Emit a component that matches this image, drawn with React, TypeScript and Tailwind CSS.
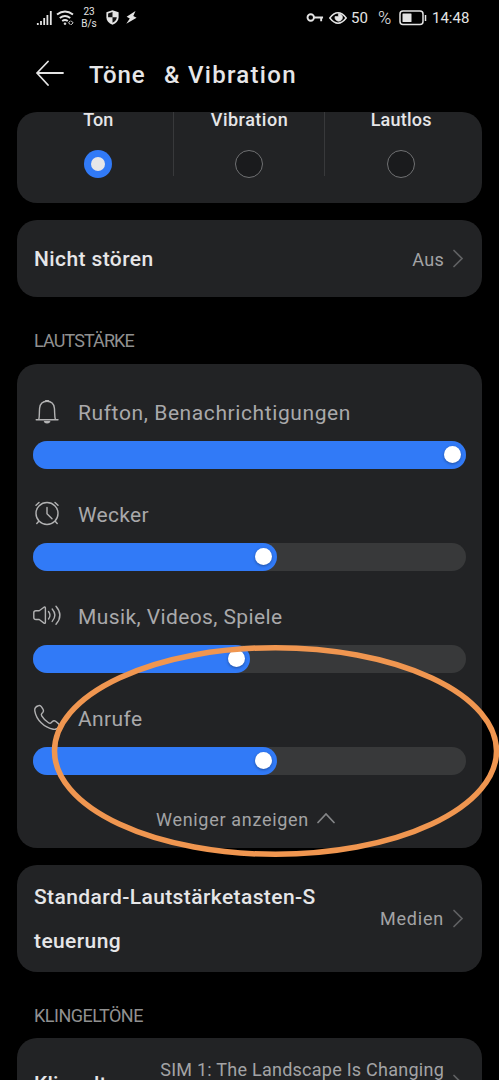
import React from "react";

const volumes = [
  { label: "Rufton, Benachrichtigungen", icon: "bell", value: 433, tracking: "tracking-[0.6px]" },
  { label: "Wecker", icon: "clock", value: 244, tracking: "tracking-[0.3px]" },
  { label: "Musik, Videos, Spiele", icon: "speaker", value: 217, tracking: "tracking-[0.4px]" },
  { label: "Anrufe", icon: "phone", value: 244, tracking: "tracking-[0.4px]" },
];

function VolumeIcon({ name }: { name: string }) {
  return (
    <svg
      className="h-7 w-7 shrink-0 overflow-visible"
      viewBox="0 0 28 28"
      fill="none"
      stroke="#b2b2b3"
      strokeWidth="1.4"
      strokeLinecap="round"
      strokeLinejoin="round"
    >
      {name === "bell" && (
        <>
          <path d="M3.2 21.7H25M5.8 21.5C6.6 18.5 6.2 14 6.6 10.2C7.1 6 10 3.3 14 3.3S20.9 6 21.4 10.2C21.8 14 21.4 18.5 22.4 21.5" />
          <path d="M12.7 2.7h2.8M11.5 23.8q2.5 2.1 5.2 0z" />
        </>
      )}
      {name === "clock" && (
        <>
          <circle cx="14" cy="13.5" r="11" />
          <path d="M14 7.5v6.3l5 5M3 5.200l3-2.800M25 5.200l-3-2.800M5.600 21.500l-1.800 2M22.400 21.500l1.800 2" />
        </>
      )}
      {name === "speaker" && (
        <>
          <path d="M3 8.8h3.2L11 5.2q1.4-.7 1.4 1v14.1q0 1.6-1.4.8l-4.8-3.6H3Q.8 17.5.8 15.5v-4.7Q.8 8.8 3 8.8z" />
          <path d="M15.5 9.5q3 3.8 0 7.5M19.200 7q5.400 6.200 0 12.400M23 4.300q7.800 9 0 18" />
        </>
      )}
      {name === "phone" && (
        <path d="M5.5 1.7C3.3 2.3 1.4 4.2 1.8 6.9C3.2 15.8 11.2 23.7 20.2 25.3C22.7 25.7 24.9 24.3 26 22.3C26.5 21.3 26.2 20.4 25.4 19.6L22.6 17.3C21.5 16.4 20.3 16.6 19.4 17.5L18.2 18.7C17.4 19.5 16.3 19.3 15.2 18.5C12.4 16.7 10.2 14.4 8.7 11.9C8 10.8 8.1 10.2 9 9.3L9.8 8.5C10.7 7.5 10.8 6.5 10.1 5.4L8.5 2.9C7.8 1.8 6.8 1.3 5.5 1.7z" />
      )}
    </svg>
  );
}

function Chevron() {
  return (
    <svg className="h-5 w-3 shrink-0" viewBox="0 0 12 20" fill="none" stroke="#606163" strokeWidth="1.7" strokeLinecap="round">
      <path d="M2 1.5l8 8-8 8" />
    </svg>
  );
}

function Slider({ value }: { value: number }) {
  return (
    <div className="h-7 w-[433px] rounded-full bg-[#38393a]">
      <div className="flex h-7 items-center justify-end rounded-full bg-[#317af7] pr-[5px] pb-px" style={{ width: value }}>
        <div className="h-[17px] w-[17px] rounded-full bg-white shadow-[0_1px_3px_rgba(0,0,0,0.35)]" />
      </div>
    </div>
  );
}

function StatusBar() {
  return (
    <div className="flex h-9 justify-between pr-[29px] pl-9 text-[#e4e4e4]">
      <div className="flex h-[35px] items-center">
        <svg className="h-4 w-4" viewBox="0 0 16 16" fill="none" stroke="currentColor" strokeWidth="1.8">
          <path d="M1.8 13v2M5 11v4M8.2 8v7M11.4 5v10M14.8 1v14" />
        </svg>
        <svg className="ml-1 h-4 w-[18px]" viewBox="0 0 18 16" fill="none" stroke="currentColor" strokeWidth="2">
          <path d="M1 4.5q8-6 16 0M3.8 8q5.2-4 10.4 0M6.2 11q2.8-2 5.6 0" />
          <circle cx="9" cy="13.7" r="1" fill="currentColor" strokeWidth="0.5" />
          <path d="M14.4 10.8l-1.8 2 1.8 2M15.2 10.8l1.8 2-1.8 2" strokeWidth="1" />
        </svg>
        <div className="ml-[7px] w-4 text-center text-[10px] leading-[12px]">
          <div>23</div>
          <div>B/s</div>
        </div>
        <svg className="ml-[9px] h-[15px] w-[13px]" viewBox="0 0 13 15">
          <path d="M6.5.2l6.1 2v5.2c0 3.3-2.4 5.8-6.1 7.4C2.8 13.2.4 10.7.4 7.4V2.2z" fill="currentColor" />
          <path d="M6.5 2v5.2H2.1V3.4zM6.5 7.2h4.3c-.2 2.5-1.7 4.3-4.3 5.6z" fill="#111" />
        </svg>
        <svg className="ml-[7px] h-[13px] w-[11px]" viewBox="0 0 11 13" fill="currentColor">
          <path d="M9.5 0L.6 5.8l3.2 1.7L.3 12.8 10.6 6.7 7.3 5z" />
        </svg>
      </div>
      <div className="flex h-9 items-center text-[15px] leading-5">
        <svg className="h-[10px] w-[18px]" viewBox="0 0 19 10" fill="none" stroke="currentColor" strokeWidth="2">
          <circle cx="5" cy="4.5" r="3.4" />
          <path d="M8.5 4.5H18M16 4.5v4" />
        </svg>
        <svg className="ml-[5px] h-3 w-[18px]" viewBox="0 0 18 12" fill="none" stroke="currentColor" strokeWidth="1.5">
          <path d="M.8 6q8.2-10.4 16.4 0q-8.2 10.4-16.4 0z" />
          <path d="M9.4 1.6v3L6 4.5A3.8 3.8 0 1 0 9.4 1.6z" fill="currentColor" strokeWidth="0.6" />
        </svg>
        <span className="ml-1 w-[27px]">50</span>
        <span className="w-[21px] text-[18px] font-light">%</span>
        <svg className="h-4 w-7" viewBox="0 0 28 16" fill="none" stroke="currentColor" strokeWidth="1.5">
          <rect x="1" y="1" width="23" height="13.5" rx="3" />
          <rect x="3.5" y="3.5" width="9" height="8.5" rx="0.5" fill="currentColor" stroke="none" />
          <path d="M26.5 5v6" />
        </svg>
        <span className="ml-[5px] w-[38px] whitespace-nowrap">14:48</span>
      </div>
    </div>
  );
}

function App() {
  return (
    <main className="relative h-[1080px] w-[499px] overflow-hidden bg-black font-[Roboto,sans-serif] text-[#e6e6e8]">
      <StatusBar />
      <header className="flex h-[76px] items-center pl-9">
        <svg className="h-7 w-7" viewBox="0 0 28 28" fill="none" stroke="#e4e4e4" strokeWidth="1.8" strokeLinecap="round" strokeLinejoin="round">
          <path d="M12 1.5L1 13 12 25M1 13h26" />
        </svg>
        <h1 className="ml-[25px] flex gap-[18px] pt-[2px] text-[24px] leading-8 font-medium whitespace-nowrap">
          <span className="w-[57px] tracking-[0.9px]">Töne</span>
          <span className="tracking-[1.3px]">&amp; Vibration</span>
        </h1>
      </header>

      <div className="mx-[17px]">
        {/* Sound mode */}
        <section className="grid h-[91px] grid-cols-3 overflow-hidden rounded-[20px] bg-[#222325] px-[5px] text-[18px] font-medium">
          <div className="flex h-16 flex-col items-center border-r border-[#38393b] pl-[2px]">
            <span className="h-[38px] shrink-0 leading-[15px]">Ton</span>
            <span className="flex h-7 w-7 shrink-0 items-center justify-center rounded-full bg-[#317af7]">
              <span className="h-[14px] w-[14px] rounded-full bg-[#e6e6e8]" />
            </span>
          </div>
          <div className="flex h-16 flex-col items-center border-r border-[#38393b] pl-px">
            <span className="h-[38px] shrink-0 leading-[15px] tracking-[0.5px]">Vibration</span>
            <span className="h-7 w-7 shrink-0 rounded-full border border-[#707173] bg-[#1a1b1d]" />
          </div>
          <div className="flex h-16 flex-col items-center">
            <span className="h-[38px] shrink-0 leading-[15px] tracking-[0.2px]">Lautlos</span>
            <span className="h-7 w-7 shrink-0 rounded-full border border-[#707173] bg-[#1a1b1d]" />
          </div>
        </section>

        <section className="mt-[17px] flex h-[77px] items-center rounded-[20px] bg-[#222325] pr-[18px] pl-[17px]">
          <span className="pt-[2px] text-[21px] font-medium tracking-[0.4px]">Nicht stören</span>
          <span className="ml-auto mr-[8px] pt-px text-[18px] tracking-[0.3px] text-[#a3a3a5]">Aus</span>
          <Chevron />
        </section>

        <h2 className="flex h-[67px] items-center pt-[19px] pl-[17px] text-[18px] tracking-[-0.9px] text-[#909090]">LAUTSTÄRKE</h2>

        {/* Volume sliders */}
        <section className="h-[484px] rounded-[20px] bg-[#222325] px-4 pt-[34px]">
          {volumes.map((item) => (
            <div key={item.label} className="h-[102px]">
              <div className="flex h-[43px] items-start">
                <VolumeIcon name={item.icon} />
                <span className={`ml-[17px] pt-px text-[21px] leading-[28px] whitespace-nowrap text-[#a9a9ab] ${item.tracking}`}>
                  {item.label}
                </span>
              </div>
              <Slider value={item.value} />
            </div>
          ))}
          <div className="flex h-7 -translate-y-[1px] items-center justify-center pr-[7px] text-[18px] text-[#a3a3a5]">
            <span className="mr-[7px] tracking-[0.7px]">Weniger anzeigen</span>
            <svg className="h-3 w-5" viewBox="0 0 20 12" fill="none" stroke="#858688" strokeWidth="1.7" strokeLinecap="round">
              <path d="M2 9.5l8-8.500 8 8.500" />
            </svg>
          </div>
        </section>

        <section className="mt-[17px] flex h-[107px] items-center rounded-[20px] bg-[#222325] pr-[18px] pl-[17px]">
          <span className="text-[21px] leading-[44px] font-medium tracking-[0.4px] whitespace-nowrap">
            Standard-Lautstärketasten-S
            <br />
            teuerung
          </span>
          <span className="ml-auto mr-[8px] text-[18px] tracking-[0.8px] text-[#a3a3a5]">Medien</span>
          <Chevron />
        </section>

        <h2 className="flex h-[66px] items-center pt-[21px] pl-[17px] text-[18px] tracking-[-0.5px] text-[#909090]">KLINGELTÖNE</h2>

        <section className="flex h-[91px] items-center rounded-[20px] bg-[#222325] pr-[18px] pl-[17px]">
          <span className="pt-[2px] text-[21px] font-medium tracking-[0.2px]">Klingelton</span>
          <span className="ml-auto mr-[8px] h-[56px] text-[18px] leading-[28px] tracking-[0.25px] whitespace-nowrap text-[#a3a3a5]">
            SIM 1: The Landscape Is Changing
          </span>
          <Chevron />
        </section>
      </div>

      {/* Highlight around the call volume */}
      <svg className="pointer-events-none absolute top-[640px] left-[48px] h-[222px] w-[451px]" viewBox="0 0 451 222" fill="none">
        <ellipse cx="227.5" cy="111" rx="221" ry="103.3" stroke="#f09650" strokeWidth="5.5" />
      </svg>
    </main>
  );
}

export default App;
